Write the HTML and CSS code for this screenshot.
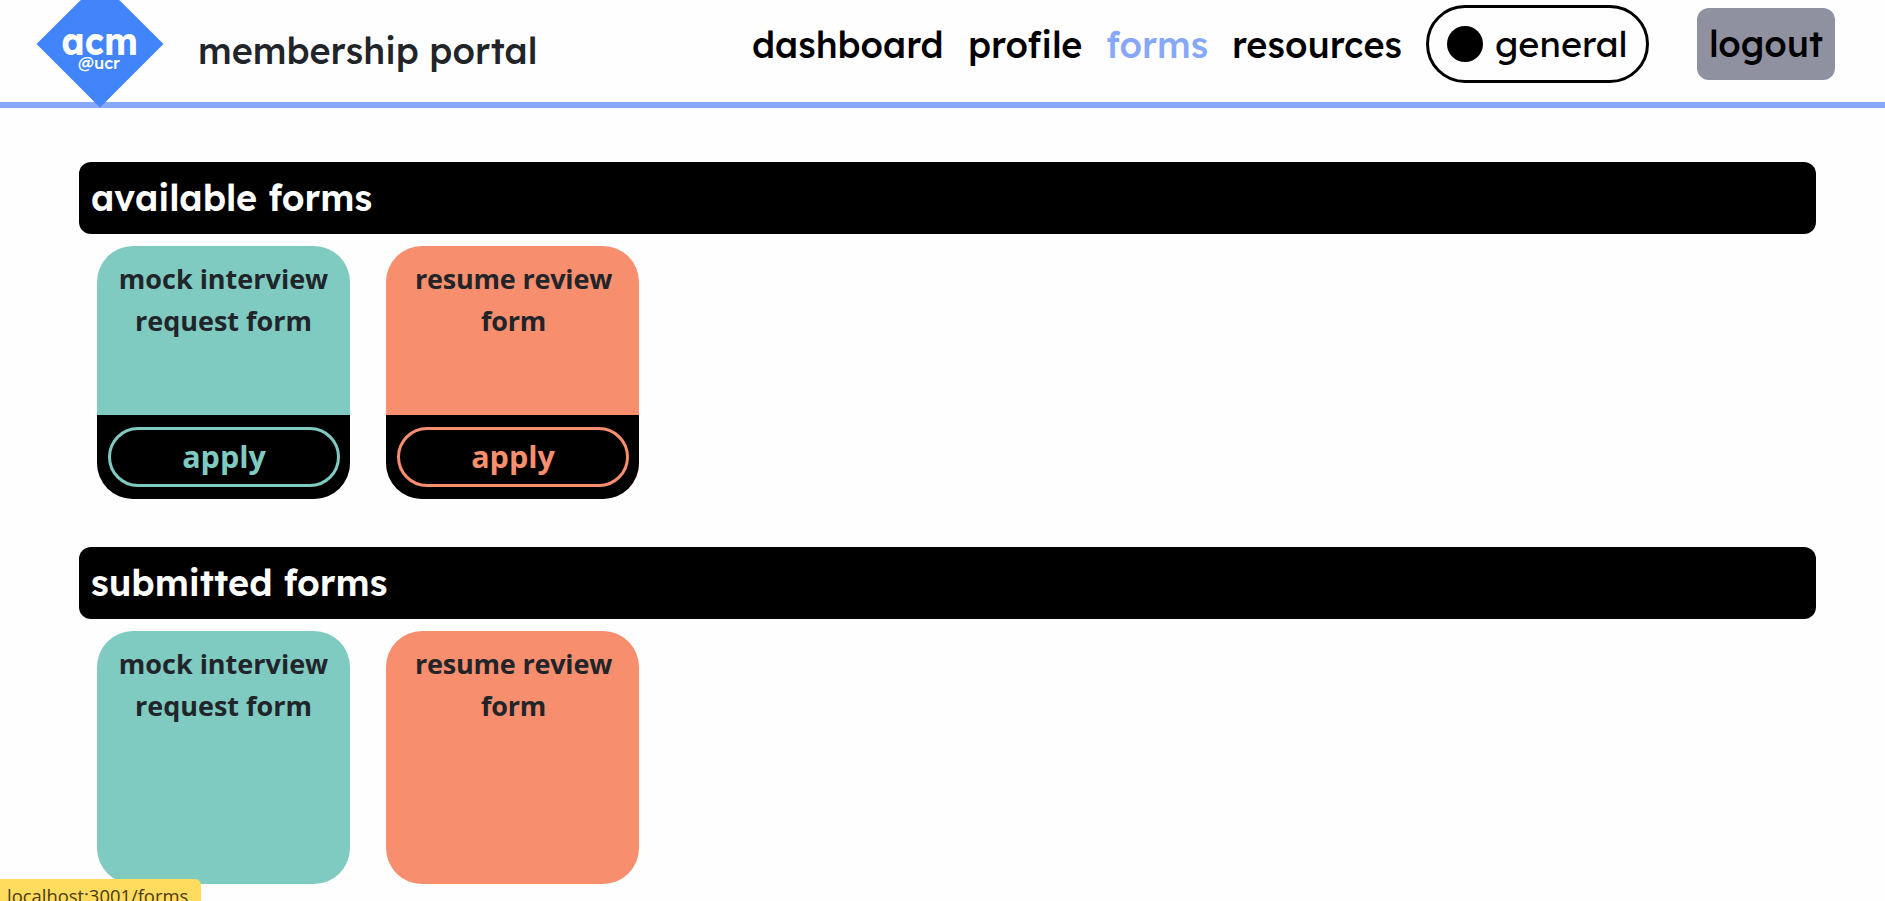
FILE: index.html
```html
<!DOCTYPE html>
<html lang="en">
<head>
<meta charset="utf-8">
<title>membership portal</title>
<link rel="stylesheet" href="styles.css">
</head>
<body>
<header class="header">
  <svg class="logo" width="128" height="108" viewBox="0 0 128 108">
    <path d="M64 -19L127.500 44L64 107.500L.5 44Z" fill="#4285fb"/>
    <text class="logo-name" x="25.500" y="54.500" textLength="76.500" lengthAdjust="spacingAndGlyphs">acm</text>
    <text class="logo-school" x="42" y="68.500" textLength="42" lengthAdjust="spacingAndGlyphs">@ucr</text>
  </svg>
  <div class="brand">membership portal</div>
  <nav class="nav">
    <a class="link dashboard">dashboard</a>
    <a class="link profile">profile</a>
    <a class="link active">forms</a>
    <a class="link resources">resources</a>
    <div class="pill"><span class="dot"></span><span class="general">general</span></div>
    <button class="logout">logout</button>
  </nav>
</header>
<main class="main">
  <section class="section">
    <h2 class="title">available forms</h2>
    <div class="cards">
      <article class="card teal">
        <div class="name">mock interview<br>request form</div>
        <div class="foot"><button class="apply">apply</button></div>
      </article>
      <article class="card coral">
        <div class="name">resume review<br>form</div>
        <div class="foot"><button class="apply">apply</button></div>
      </article>
    </div>
  </section>
  <section class="section">
    <h2 class="title submitted">submitted forms</h2>
    <div class="cards">
      <article class="card teal"><div class="name">mock interview<br>request form</div></article>
      <article class="card coral"><div class="name">resume review<br>form</div></article>
    </div>
  </section>
</main>
<div class="status">localhost:3001/forms</div>
</body>
</html>
```
FILE: styles.css
```css
* { box-sizing: border-box; }
body {
  margin: 0;
  height: 901px;
  overflow: hidden;
  background: #fefefe;
  color: #212529;
  font-family: "Open Sans", "Noto Sans", sans-serif;
}
.header {
  display: flex;
  height: 108px;
  padding-left: 36px;
  background: linear-gradient(#86a8f7, #86a8f7) bottom / 100% 6px no-repeat;
  font-family: Lexend, Inter, sans-serif;
  font-size: 36px;
  line-height: 44px;
  white-space: nowrap;
}
.logo { flex: none; }
.logo text { fill: #fff; font-family: Lexend, Inter, sans-serif; }
.logo-name { font-size: 39px; font-weight: 700; }
.logo-school { font-size: 17px; font-weight: 500; }
.brand { margin: 29px 0 0 34px; width: 340px; font-weight: 500; }
.nav {
  display: flex;
  align-items: center;
  height: 78px;
  margin: 5px 50px 0 auto;
  color: #000;
}
.link { padding-top: 1px; font-weight: 500; }
.dashboard { width: 216px; }
.profile { width: 138px; }
.active { width: 126px; color: #86a8f7; }
.resources { width: 194px; }
.pill {
  display: flex;
  align-items: center;
  gap: 12px;
  width: 223px;
  height: 78px;
  padding-left: 18px;
  border: 3px solid #000;
  border-radius: 39px;
}
.dot { width: 36px; height: 36px; border-radius: 50%; background: #000; }
.logout {
  width: 138px;
  height: 72px;
  margin-left: 48px;
  padding: 0;
  border: 0;
  border-radius: 12px;
  background: #9091a0;
  color: #000;
  font: 500 36px/44px Lexend, Inter, sans-serif;
}
.main { padding: 54px 69px 0 79px; }
.section { height: 385px; }
.title {
  height: 72px;
  margin: 0;
  padding: 0 12px;
  border-radius: 12px;
  background: #000;
  color: #fff;
  font: 600 36px/72px Lexend, Inter, sans-serif;
}
.cards { display: flex; gap: 36px; padding: 12px 18px; }
.card {
  display: flex;
  flex-direction: column;
  justify-content: space-between;
  width: 253px;
  height: 253px;
  border-radius: 36px;
  overflow: hidden;
  text-align: center;
}
.teal { --tone: #7fcbc2; background: var(--tone); }
.coral { --tone: #f78e6e; background: var(--tone); }
.name { padding-top: 12px; font-size: 27px; font-weight: 700; line-height: 42px; white-space: nowrap; }
.coral .name { padding-left: 2px; letter-spacing: -.2px; }
.foot { height: 84px; padding: 12px 10px 12px 11px; background: #000; }
.apply {
  width: 232px;
  height: 60px;
  padding: 0 0 2px;
  border: 3px solid var(--tone);
  border-radius: 30px;
  background: #000;
  color: var(--tone);
  font: 700 30.500px/50px "Open Sans", "Noto Sans", sans-serif;
}
.status {
  position: fixed;
  left: 0;
  top: 879px;
  width: 201px;
  height: 30px;
  padding-left: 7px;
  border-radius: 0 6px 0 0;
  background: #ffdc5e;
  color: #4a3a18;
  font-size: 18.400px;
  line-height: 33px;
  white-space: nowrap;
}
```
